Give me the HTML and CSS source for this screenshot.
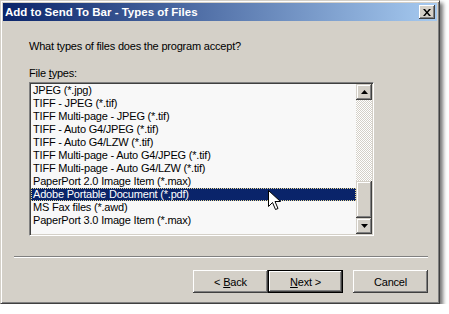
FILE: index.html
```html
<!DOCTYPE html>
<html lang="en">
<head>
    <meta charset="UTF-8">
    <title>Add to Send To Bar - Types of Files</title>
    <link rel="stylesheet" href="styles.css">
</head>
<body>
    <div class="janela">
        <div class="titulo">
            <span class="titulo-texto">Add to Send To Bar - Types of Files</span>
            <button class="fechar">
                <svg width="8" height="7" viewBox="0 0 8 7">
                    <path d="M0 0h2l2 2.5L6 0h2L5 3.5 8 7H6L4 4.5 2 7H0l3-3.5z" fill="#000"/>
                </svg>
            </button>
        </div>
        <div class="cliente">
            <p class="pergunta">What types of files does the program accept?</p>
            <p class="rotulo">File <u>t</u>ypes:</p>
            <div class="lista">
                <ul class="itens">
                    <li>JPEG (*.jpg)</li>
                    <li>TIFF - JPEG (*.tif)</li>
                    <li>TIFF Multi-page - JPEG (*.tif)</li>
                    <li>TIFF - Auto G4/JPEG (*.tif)</li>
                    <li>TIFF - Auto G4/LZW (*.tif)</li>
                    <li>TIFF Multi-page - Auto G4/JPEG (*.tif)</li>
                    <li>TIFF Multi-page - Auto G4/LZW (*.tif)</li>
                    <li>PaperPort 2.0 Image Item (*.max)</li>
                    <li class="selecionado">Adobe Portable Document (*.pdf)</li>
                    <li>MS Fax files (*.awd)</li>
                    <li>PaperPort 3.0 Image Item (*.max)</li>
                </ul>
                <div class="rolagem">
                    <div class="seta">
                        <svg width="7" height="4" viewBox="0 0 7 4"><path d="M3.5 0L7 4H0z" fill="#000"/></svg>
                    </div>
                    <div class="trilho"><div class="polegar"></div></div>
                    <div class="seta">
                        <svg width="7" height="4" viewBox="0 0 7 4"><path d="M0 0h7L3.5 4z" fill="#000"/></svg>
                    </div>
                </div>
            </div>
            <div class="separador"></div>
            <div class="botoes">
                <button class="botao">&lt; <u>B</u>ack</button>
                <button class="botao padrao"><u>N</u>ext &gt;</button>
                <button class="botao cancelar">Cancel</button>
            </div>
        </div>
        <!-- ponteiro do mouse por cima da lista -->
        <svg class="cursor" width="13" height="21" viewBox="0 0 13 21">
            <path d="M0.5 0.5V16.5L4.5 12.5L7.5 19.5L10 18.5L7 11.5H12.5Z" fill="#fff" stroke="#000" stroke-linejoin="miter"/>
        </svg>
    </div>
</body>
</html>
```

FILE: styles.css
```css
* {
    margin: 0;
    padding: 0;
    box-sizing: border-box;
}
body {
    background-color: #fff;
    font-family: "Liberation Sans", Arial, sans-serif;
    font-size: 11px;
    letter-spacing: -0.2px;
    color: #000;
}
.janela {
    position: relative;
    width: 440px;
    height: 304px;
    background-color: #d4d0c8;
    border: 1px solid;
    border-color: #d4d0c8 #404040 #404040 #d4d0c8;
    padding: 2px;
    box-shadow: inset 1px 1px #fff, inset -1px -1px #808080, 3px 3px 4px rgba(0, 0, 0, 0.55);
    display: flex;
    flex-direction: column;
}
.titulo {
    height: 18px;
    display: flex;
    align-items: center;
    justify-content: space-between;
    padding-left: 2px;
    background: linear-gradient(to right, #0a246a, #a6caf0);
}
.titulo-texto {
    color: #fff;
    font-weight: bold;
    font-size: 11.5px;
    letter-spacing: 0;
}
.fechar {
    width: 16px;
    height: 14px;
    margin-right: 2px;
    background-color: #d4d0c8;
    border: none;
    display: flex;
    align-items: center;
    justify-content: center;
    box-shadow: inset -1px -1px #404040, inset 1px 1px #fff, inset -2px -2px #808080;
}
.cliente {
    flex: 1;
    padding: 0 9px 0 11px;
}
.pergunta {
    margin: 19px 0 0 15px;
    line-height: 13px;
}
.rotulo {
    margin: 14px 0 0 15px;
    line-height: 13px;
}
.lista {
    margin: 2px 0 0 15px;
    width: 345px;
    height: 154px;
    border: 1px solid;
    border-color: #808080 #fff #fff #808080;
    padding: 1px;
    box-shadow: inset 1px 1px #404040, inset -1px -1px #d4d0c8;
    background-color: #f8f8f8;
    display: flex;
}
.itens {
    flex: 1;
    list-style: none;
    overflow: hidden;
}
.itens li {
    height: 13px;
    line-height: 13px;
    padding-left: 2px;
    white-space: nowrap;
}
.itens .selecionado {
    background-color: #0a246a;
    color: #fff;
    outline: 1px dotted #e8d890;
    outline-offset: -1px;
}
.rolagem {
    width: 16px;
    display: flex;
    flex-direction: column;
}
.seta {
    height: 16px;
    background-color: #d4d0c8;
    display: flex;
    align-items: center;
    justify-content: center;
    box-shadow: inset -1px -1px #404040, inset 1px 1px #d4d0c8, inset -2px -2px #808080, inset 2px 2px #fff;
}
.trilho {
    flex: 1;
    display: flex;
    flex-direction: column;
    justify-content: flex-end;
    background-image: conic-gradient(#fff 25%, #d4d0c8 0 50%, #fff 0 75%, #d4d0c8 0);
    background-size: 2px 2px;
}
.polegar {
    height: 37px;
    background-color: #d4d0c8;
    box-shadow: inset -1px -1px #404040, inset 1px 1px #d4d0c8, inset -2px -2px #808080, inset 2px 2px #fff;
}
.separador {
    margin-top: 20px;
    height: 2px;
    border-top: 1px solid #808080;
    border-bottom: 1px solid #fff;
}
.botoes {
    margin-top: 12px;
    display: flex;
    justify-content: flex-end;
}
.botao {
    width: 75px;
    height: 23px;
    font-family: "Liberation Sans", Arial, sans-serif;
    font-size: 11px;
    letter-spacing: -0.2px;
    color: #000;
    background-color: #d4d0c8;
    border: none;
    box-shadow: inset -1px -1px #404040, inset 1px 1px #fff, inset -2px -2px #808080;
}
.padrao {
    border: 1px solid #000;
}
.cancelar {
    margin-left: 10px;
}
.cursor {
    position: absolute;
    left: 267px;
    top: 189px;
}
```
